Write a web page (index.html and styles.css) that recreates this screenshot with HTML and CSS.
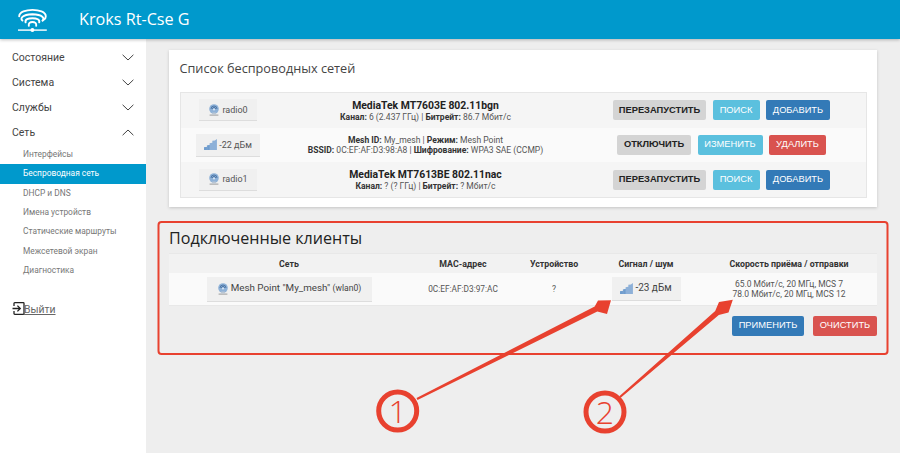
FILE: index.html
```html
<!DOCTYPE html>
<html lang="ru">
<head>
<meta charset="utf-8">
<title>Kroks Rt-Cse G</title>
<link rel="stylesheet" href="styles.css">
</head>
<body>
<svg width="0" height="0" class="defs">
  <symbol id="radio" viewBox="0 0 12 12">
    <circle cx="6" cy="5" r="4.800" fill="#8fb2d8"/>
    <path d="M3 5a3 3 0 0 1 6 0M4.400 5a1.600 1.600 0 0 1 3.200 0" fill="none" stroke="#4f78a8" stroke-width="1"/>
    <circle cx="6" cy="5.400" r="1" fill="#dbe7f3"/>
    <path d="M1.600 10.600h8.800v1H1.600z" fill="#9a9a9a"/>
    <path d="M4.400 8.600h3.200l.8 2H3.600z" fill="#b9c6d4"/>
  </symbol>
  <symbol id="signal" viewBox="0 0 14 12">
    <path d="M0 12V9l3-.4V7l3-.4V4.600l3-.4V2l2.800-.4L14 0v12z" fill="#8db0d8"/>
    <path d="M0 12V9l3-.4V12zM3.500 12V7l2.500-.4V12z" fill="#6f9ccd"/>
  </symbol>
</svg>
<header class="topbar">
  <svg class="logo" viewBox="0 0 32 30" width="32" height="30">
    <g fill="none" stroke="#fff" stroke-width="1.900" stroke-linecap="round">
      <path d="M2.200 11.200C2.600 2.800 28.400 2.800 28.800 11.200C29 13.800 26.800 14.600 25.600 15.600"/>
      <path d="M5.400 15.600C3 13.800 4.600 9.600 15.400 9.300C26 9.600 27.800 13.600 25.600 15.600"/>
      <path d="M8.600 17.400C7.800 14.400 11 13.200 15.400 13.200C20 13.200 23 14.600 22.200 17.400"/>
      <path d="M11.800 20.800C11.400 18.200 13 17 15.400 17C18 17 19.600 18.200 19.200 20.800"/>
    </g>
    <path d="M1 25.100H29.800" stroke="#fff" stroke-width="1.400"/>
    <circle cx="15.400" cy="25.100" r="2" fill="#fff"/>
  </svg>
  <span class="brand">Kroks Rt-Cse G</span>
</header>
<div class="layout">
  <nav class="sidebar">
    <ul class="menu">
      <li class="menu-item"><span>Состояние</span><svg class="chev" viewBox="0 0 12 7" width="12" height="7"><path d="M.6.8 6 6 11.400.8"/></svg></li>
      <li class="menu-item"><span>Система</span><svg class="chev" viewBox="0 0 12 7" width="12" height="7"><path d="M.6.8 6 6 11.400.8"/></svg></li>
      <li class="menu-item"><span>Службы</span><svg class="chev" viewBox="0 0 12 7" width="12" height="7"><path d="M.6.8 6 6 11.400.8"/></svg></li>
      <li class="menu-item"><span>Сеть</span><svg class="chev" viewBox="0 0 12 7" width="12" height="7"><path d="M.6 6.200 6 1l5.400 5.200"/></svg></li>
    </ul>
    <ul class="submenu">
      <li>Интерфейсы</li>
      <li class="active">Беспроводная сеть</li>
      <li>DHCP и DNS</li>
      <li>Имена устройств</li>
      <li>Статические маршруты</li>
      <li>Межсетевой экран</li>
      <li>Диагностика</li>
    </ul>
    <div class="logout">
      <svg class="logout-icon" viewBox="0 0 13 13" width="13" height="13">
        <path d="M2 4V1.500Q2 .700 2.800 .700H11.300Q12 .700 12 1.500V11.500Q12 12.300 11.300 12.300H2.800Q2 12.300 2 11.500V9M.5 6.500H8M5.400 3.600 8.300 6.500 5.400 9.400" fill="none" stroke="#222" stroke-width="1.300"/>
      </svg>
      <a class="logout-link">Выйти</a>
    </div>
  </nav>
  <main class="content">
    <section class="card">
      <h2 class="card-title">Список беспроводных сетей</h2>
      <div class="net-table">
        <div class="net-row odd">
          <div class="net-cell"><span class="badge b-radio"><svg class="ico"><use href="#radio"/></svg>radio0</span></div>
          <div class="net-info"><strong class="net-name">MediaTek MT7603E 802.11bgn</strong><span><b>Канал:</b> 6 (2.437 ГГц) | <b>Битрейт:</b> 86.7 Мбит/с</span></div>
          <div class="net-actions"><button class="btn gray w93">Перезапустить</button><button class="btn info w47">Поиск</button><button class="btn primary w64">Добавить</button></div>
        </div>
        <div class="net-row even">
          <div class="net-cell"><span class="badge b-signal"><svg class="ico sig"><use href="#signal"/></svg>-22 дБм</span></div>
          <div class="net-info"><span><b>Mesh ID:</b> My_mesh | <b>Режим:</b> Mesh Point</span><span><b>BSSID:</b> 0C:EF:AF:D3:98:A8 | <b>Шифрование:</b> WPA3 SAE (CCMP)</span></div>
          <div class="net-actions"><button class="btn gray w74">Отключить</button><button class="btn info w65">Изменить</button><button class="btn danger w57">Удалить</button></div>
        </div>
        <div class="net-row odd">
          <div class="net-cell"><span class="badge b-radio"><svg class="ico"><use href="#radio"/></svg>radio1</span></div>
          <div class="net-info"><strong class="net-name">MediaTek MT7613BE 802.11nac</strong><span><b>Канал:</b> ? (? ГГц) | <b>Битрейт:</b> ? Мбит/с</span></div>
          <div class="net-actions"><button class="btn gray w93">Перезапустить</button><button class="btn info w47">Поиск</button><button class="btn primary w64">Добавить</button></div>
        </div>
      </div>
    </section>
    <section class="clients">
      <h2 class="clients-title">Подключенные клиенты</h2>
      <div class="cl-table">
        <div class="cl-row cl-head"><div>Сеть</div><div>MAC-адрес</div><div>Устройство</div><div>Сигнал / шум</div><div>Скорость приёма / отправки</div></div>
        <div class="cl-row cl-body">
          <div><span class="badge b-net"><svg class="ico"><use href="#radio"/></svg>Mesh Point "My_mesh"&nbsp;<small>(wlan0)</small></span></div>
          <div class="mac">0C:EF:AF:D3:97:AC</div>
          <div>?</div>
          <div><span class="badge b-sig2"><svg class="ico sig"><use href="#signal"/></svg>-23 дБм</span></div>
          <div>65.0 Мбит/с, 20 МГц, MCS 7<br>78.0 Мбит/с, 20 МГц, MCS 12</div>
        </div>
      </div>
      <div class="cl-actions"><button class="btn primary w72">Применить</button><button class="btn danger w64">Очистить</button></div>
    </section>
  </main>
</div>
<svg class="annot" viewBox="0 0 900 459" width="900" height="459">
  <rect x="158.500" y="222" width="729" height="132" rx="3" fill="none" stroke="#e8412f" stroke-width="2"/>
  <path d="M416.500 398.100 594.700 306.500 598 300.500 611 300.300 607 314 597.300 311.500 417.500 399.900Z" fill="#e8412f"/>
  <path d="M619.300 396.300 715.200 310.900 719 302 732.800 299.800 728.500 312.500 718.800 315.100 620.700 397.700Z" fill="#e8412f"/>
  <circle cx="397.700" cy="411" r="19" fill="none" stroke="#e8412f" stroke-width="5"/>
  <circle cx="605" cy="412" r="19" fill="none" stroke="#e8412f" stroke-width="5"/>
  <text class="num" x="397.700" y="423">1</text>
  <text class="num" x="605" y="424">2</text>
</svg>
</body>
</html>
```
FILE: styles.css
```css
* { box-sizing: border-box; }
html, body { margin: 0; padding: 0; }
body {
  width: 900px;
  height: 459px;
  overflow: hidden;
  position: relative;
  background: #fff;
  font-family: Roboto, "Open Sans", sans-serif;
  color: #444;
}
.defs { position: absolute; }
ul { list-style: none; margin: 0; padding: 0; }

.topbar {
  position: relative;
  z-index: 2;
  height: 39px;
  background: #0099cc;
  display: flex;
  align-items: center;
  padding-left: 17px;
  box-shadow: 0 1px 3px rgba(0, 0, 0, .25);
}
.logo { flex: none; margin-top: 1px; }
.brand {
  margin-left: 30px;
  color: #fff;
  font-family: "Open Sans", sans-serif;
  font-size: 16.200px;
  line-height: 1;
  margin-top: -1px;
}

.layout { display: flex; height: 414px; }
.sidebar { width: 146px; flex: none; background: #fff; padding-top: 6px; }
.menu-item {
  height: 25px;
  padding: 0 12px;
  display: flex;
  align-items: center;
  justify-content: space-between;
  font-size: 10.500px;
  color: #444;
}
.chev { fill: none; stroke: #444; stroke-width: 1; }
.submenu li {
  height: 19.330px;
  line-height: 19.330px;
  padding-left: 23px;
  font-size: 8.400px;
  color: #777;
}
.submenu li.active { background: #0099cc; color: #fff; }
.logout {
  margin-top: 22px;
  padding-left: 12px;
  display: flex;
  align-items: center;
  height: 14px;
}
.logout-icon { flex: none; margin-top: -2px; }
.logout-link {
  margin-left: -1px;
  font-size: 10.400px;
  color: #666;
  text-decoration: underline;
}

.content {
  flex: 1;
  background: #eee;
  padding: 11px 23px 0 23px;
}
.card {
  width: 708px;
  height: 157px;
  background: #fff;
  padding: 0 10.500px;
  box-shadow: 0 1px 3px rgba(0, 0, 0, .18);
}
.card-title {
  margin: 0;
  height: 42px;
  padding-top: 10px;
  font-family: "Open Sans", sans-serif;
  font-weight: 400;
  font-size: 12.700px;
  line-height: 17px;
  color: #444;
}
.net-table { border: 1px solid #e6e6e6; }
.net-row {
  display: grid;
  grid-template-columns: 95px 300px 1fr;
  height: 34.700px;
  align-items: center;
}
.odd { background: #f5f5f5; }
.even { background: #fafafa; }
.net-cell { display: flex; justify-content: center; }
.net-info {
  display: flex;
  flex-direction: column;
  align-items: center;
  font-size: 8.550px;
  line-height: 10.500px;
  color: #555;
  white-space: nowrap;
}
.net-info b { color: #333; }
.net-name { font-size: 10.400px; line-height: 13px; color: #222; }
.net-actions { display: flex; justify-content: center; gap: 6.500px; padding-left: 2px; }

.badge {
  display: inline-flex;
  align-items: center;
  justify-content: center;
  background: #f0f0f0;
  border-bottom: 1px solid #ddd;
  font-size: 9px;
  color: #555;
  white-space: nowrap;
}
.b-radio { width: 58px; height: 22px; }
.b-signal { width: 64px; height: 23px; }
.b-net { width: 165px; height: 25px; font-size: 9.800px; color: #444; }
.b-net small { font-size: 8.600px; }
.b-sig2 { width: 69px; height: 24px; font-size: 10px; color: #444; }
.ico { width: 12px; height: 12px; margin-right: 2px; }
.ico.sig { width: 13px; height: 11px; margin-right: 2px; }

.btn {
  height: 20px;
  padding: 0;
  border: 1px solid transparent;
  border-radius: 2px;
  font-family: "Liberation Sans", Arial, sans-serif;
  font-size: 9.300px;
  line-height: 1;
  text-transform: uppercase;
  color: #fff;
}
.gray { background: #d4d4d4; color: #222; font-weight: 700; }
.info { background: #5bc0de; }
.primary { background: #337ab7; }
.danger { background: #d9534f; }
.w93 { width: 93px; }
.w47 { width: 47px; }
.w64 { width: 64px; }
.w74 { width: 74px; }
.w65 { width: 65px; }
.w57 { width: 57px; }
.w72 { width: 72px; }

.clients { padding-top: 22px; width: 708px; }
.clients-title {
  margin: 0;
  height: 24px;
  font-family: "Open Sans", sans-serif;
  font-weight: 400;
  font-size: 16.100px;
  line-height: 18px;
  color: #222;
}
.cl-table { border: 1px solid #e8e8e8; border-width: 1px 0; }
.cl-row {
  display: grid;
  grid-template-columns: 240px 108px 74px 110px 1fr;
  align-items: center;
  text-align: center;
}
.cl-head {
  height: 19px;
  background: #f2f2f2;
  font-size: 8.800px;
  font-weight: 700;
  color: #333;
}
.cl-body {
  height: 32px;
  background: #fafafa;
  font-size: 8.500px;
  line-height: 10.500px;
  color: #555;
}
.mac { font-size: 8.300px; }
.cl-actions { display: flex; justify-content: flex-end; gap: 9px; margin-top: 10px; }

.annot { position: absolute; left: 0; top: 0; pointer-events: none; z-index: 3; }
.num {
  font-family: "Open Sans", sans-serif;
  font-weight: 300;
  font-size: 32px;
  fill: #e8412f;
  text-anchor: middle;
}
```
